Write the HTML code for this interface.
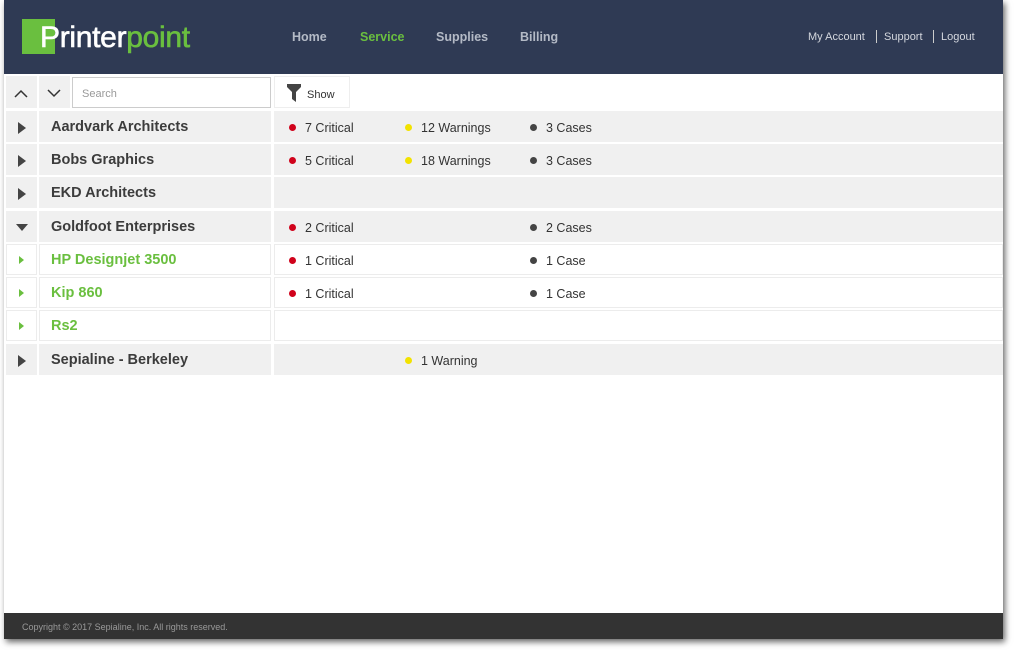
<!DOCTYPE html>
<html><head><style>
*{margin:0;padding:0;box-sizing:border-box}
body{width:1018px;height:650px;background:#fff;font-family:"Liberation Sans",Arial,sans-serif;position:relative;overflow:hidden}
.win{position:absolute;left:4px;top:0;width:999px;height:639px;background:#fff;box-shadow:2px 3px 6px rgba(0,0,0,.6)}
.hdr{position:absolute;left:0;top:0;width:999px;height:74px;background:#2f3a54}
.logo{position:absolute;left:18px;top:19px;width:33px;height:35px;background:#6abf3f}
.lt{position:absolute;left:36px;top:21px;font-size:30px;color:#fff;letter-spacing:-0.3px;-webkit-text-stroke:0.6px}
.lt span{color:#6abf3f}
.nav{position:absolute;top:30px;font-size:12.5px;font-weight:bold;color:#b4bac6}
.acc{position:absolute;top:31px;font-size:11px;color:#d4d7de}
.sep{position:absolute;top:30px;width:1px;height:13px;background:#ccc}
.c{position:absolute;background:#f0f0f0}
.w{background:#fff;border:1px solid #ececec}
.name{position:absolute;left:12px;top:8px;font-size:14.5px;font-weight:bold;color:#3c3c3c}
.w .name{left:11px;top:7px}
.g{color:#6abf3f}
.st{position:absolute;top:10px;font-size:12.5px;color:#333}
.w .st{top:9px;margin-left:-1px}
.dot{display:inline-block;width:7px;height:7px;border-radius:50%;margin-right:9px;vertical-align:1px}
.r{background:#d0021b}.y{background:#f2e200}.k{background:#444}
.tri{position:absolute;left:12px;top:11px;width:0;height:0;border-top:6px solid transparent;border-bottom:6px solid transparent;border-left:8px solid #444}
.tris{position:absolute;left:12px;top:11px;width:0;height:0;border-top:4px solid transparent;border-bottom:4px solid transparent;border-left:5px solid #6abf3f}
.foot{position:absolute;left:0;top:613px;width:999px;height:26px;background:#333;color:#999;font-size:9px;padding:9px 18px}
</style></head><body>
<div class="win">
<div class="hdr">
<div class="logo"></div><div class="lt">Printer<span>point</span></div>
<div class="nav" style="left:288px">Home</div>
<div class="nav" style="left:356px;color:#6abf3f">Service</div>
<div class="nav" style="left:432px">Supplies</div>
<div class="nav" style="left:516px">Billing</div>
<div class="acc" style="left:804px">My Account</div><div class="sep" style="left:872px"></div>
<div class="acc" style="left:880px">Support</div><div class="sep" style="left:929px"></div>
<div class="acc" style="left:937px">Logout</div>
</div>
<!-- toolbar -->
<div class="c" style="left:2px;top:76px;width:31px;height:32px"><svg width="31" height="32"><path d="M9 21l6-6 6 6" stroke="#333" stroke-width="1.5" fill="none"/></svg></div>
<div class="c" style="left:35px;top:76px;width:31px;height:32px"><svg width="31" height="32"><path d="M9 14l6 6 6-6" stroke="#333" stroke-width="1.5" fill="none"/></svg></div>
<div style="position:absolute;left:68px;top:77px;width:199px;height:31px;border:1px solid #ccc;background:#fff;font-size:11px;color:#999;padding:10px 9px">Search</div>
<div style="position:absolute;left:270px;top:76px;width:76px;height:32px;border:1px solid #eee;background:#fff"><svg style="position:absolute;left:12px;top:7px" width="14" height="18"><path d="M0 0h14v3l-5 5v10l-4-3v-7l-5-5z" fill="#444"/></svg><span style="position:absolute;left:32px;top:12px;font-size:11px;color:#333">Show</span></div>

<!-- rows -->
<div class="c" style="left:2px;top:111px;width:31px;height:31px"><div class="tri"></div></div>
<div class="c" style="left:35px;top:111px;width:232px;height:31px"><div class="name">Aardvark Architects</div></div>
<div class="c" style="left:270px;top:111px;width:729px;height:31px"><div class="st" style="left:15px"><i class="dot r"></i>7 Critical</div><div class="st" style="left:131px"><i class="dot y"></i>12 Warnings</div><div class="st" style="left:256px"><i class="dot k"></i>3 Cases</div></div>

<div class="c" style="left:2px;top:144px;width:31px;height:31px"><div class="tri"></div></div>
<div class="c" style="left:35px;top:144px;width:232px;height:31px"><div class="name">Bobs Graphics</div></div>
<div class="c" style="left:270px;top:144px;width:729px;height:31px"><div class="st" style="left:15px"><i class="dot r"></i>5 Critical</div><div class="st" style="left:131px"><i class="dot y"></i>18 Warnings</div><div class="st" style="left:256px"><i class="dot k"></i>3 Cases</div></div>

<div class="c" style="left:2px;top:177px;width:31px;height:31px"><div class="tri"></div></div>
<div class="c" style="left:35px;top:177px;width:232px;height:31px"><div class="name">EKD Architects</div></div>
<div class="c" style="left:270px;top:177px;width:729px;height:31px"></div>

<div class="c" style="left:2px;top:211px;width:31px;height:31px"><div style="position:absolute;left:10px;top:13px;border-left:6px solid transparent;border-right:6px solid transparent;border-top:7px solid #444"></div></div>
<div class="c" style="left:35px;top:211px;width:232px;height:31px"><div class="name">Goldfoot Enterprises</div></div>
<div class="c" style="left:270px;top:211px;width:729px;height:31px"><div class="st" style="left:15px"><i class="dot r"></i>2 Critical</div><div class="st" style="left:256px"><i class="dot k"></i>2 Cases</div></div>

<div class="c w" style="left:2px;top:244px;width:31px;height:31px"><div class="tris"></div></div>
<div class="c w" style="left:35px;top:244px;width:232px;height:31px"><div class="name g">HP Designjet 3500</div></div>
<div class="c w" style="left:270px;top:244px;width:729px;height:31px"><div class="st" style="left:15px"><i class="dot r"></i>1 Critical</div><div class="st" style="left:256px"><i class="dot k"></i>1 Case</div></div>

<div class="c w" style="left:2px;top:277px;width:31px;height:31px"><div class="tris"></div></div>
<div class="c w" style="left:35px;top:277px;width:232px;height:31px"><div class="name g">Kip 860</div></div>
<div class="c w" style="left:270px;top:277px;width:729px;height:31px"><div class="st" style="left:15px"><i class="dot r"></i>1 Critical</div><div class="st" style="left:256px"><i class="dot k"></i>1 Case</div></div>

<div class="c w" style="left:2px;top:310px;width:31px;height:31px"><div class="tris"></div></div>
<div class="c w" style="left:35px;top:310px;width:232px;height:31px"><div class="name g">Rs2</div></div>
<div class="c w" style="left:270px;top:310px;width:729px;height:31px"></div>

<div class="c" style="left:2px;top:344px;width:31px;height:31px"><div class="tri"></div></div>
<div class="c" style="left:35px;top:344px;width:232px;height:31px"><div class="name">Sepialine - Berkeley</div></div>
<div class="c" style="left:270px;top:344px;width:729px;height:31px"><div class="st" style="left:131px"><i class="dot y"></i>1 Warning</div></div>

<div class="foot">Copyright © 2017 Sepialine, Inc. All rights reserved.</div>
</div>
</body></html>
